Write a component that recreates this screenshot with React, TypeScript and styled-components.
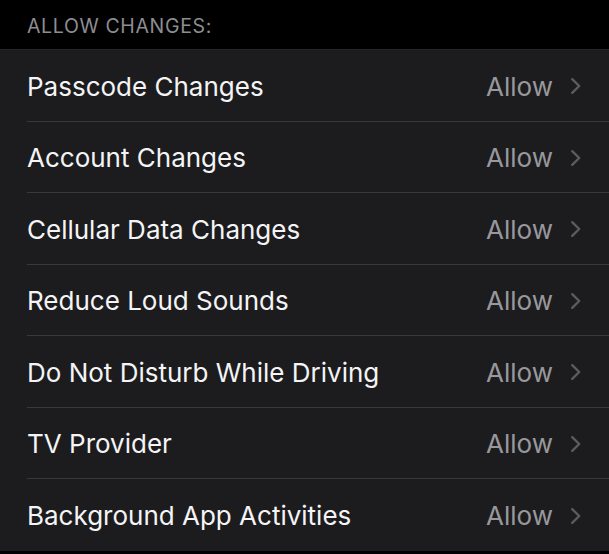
import React from "react";
import styled, { createGlobalStyle } from "styled-components";

const Global = createGlobalStyle`
  html, body { margin: 0; padding: 0; background: #000; }
  body { font-family: Inter, "Liberation Sans", Arial, sans-serif; -webkit-font-smoothing: antialiased; }
`;

const Page = styled.div`
  width: 609px;
  height: 554px;
  background: #000;
  overflow: hidden;
`;

const SectionHeader = styled.div`
  height: 49px;
  display: flex;
  align-items: center;
  padding: 3px 0 0 27px;
  box-sizing: border-box;
  color: #8d8d92;
  font-size: 19.5px;
  letter-spacing: 0.65px;
  text-transform: uppercase;
`;

const List = styled.div`
  background: #1c1c1e;
  border-top: 1px solid #262628;
`;

const Row = styled.div`
  height: 71.5px;
  box-sizing: border-box;
  display: flex;
  align-items: stretch;
  padding-left: 27px;
`;

const RowInner = styled.div<{ $last?: boolean }>`
  flex: 1;
  display: flex;
  align-items: center;
  padding: 2px 27px 0 0;
  border-bottom: ${(p) => (p.$last ? "none" : "1px solid #38383a")};
`;

const Label = styled.span`
  flex: 1;
  color: #f4f4f6;
  font-size: 26px;
`;

const Value = styled.span`
  color: #98989d;
  font-size: 26px;
  margin-right: 17px;
`;

const ChevronSvg = styled.svg`
  display: block;
  flex: none;
`;

const Chevron = () => (
  <ChevronSvg width="12" height="18" viewBox="0 0 12 18" fill="none">
    <path d="M2.2 2.2 L9.2 9 L2.2 15.8" stroke="#5c5c60" strokeWidth="2.4" strokeLinecap="round" strokeLinejoin="round" />
  </ChevronSvg>
);

const items = [
  "Passcode Changes",
  "Account Changes",
  "Cellular Data Changes",
  "Reduce Loud Sounds",
  "Do Not Disturb While Driving",
  "TV Provider",
  "Background App Activities",
];

export default function App() {
  return (
    <Page>
      <Global />
      <SectionHeader>Allow Changes:</SectionHeader>
      <List>
        {items.map((t, i) => (
          <Row key={t}>
            <RowInner $last={i === items.length - 1}>
              <Label>{t}</Label>
              <Value>Allow</Value>
              <Chevron />
            </RowInner>
          </Row>
        ))}
      </List>
    </Page>
  );
}
